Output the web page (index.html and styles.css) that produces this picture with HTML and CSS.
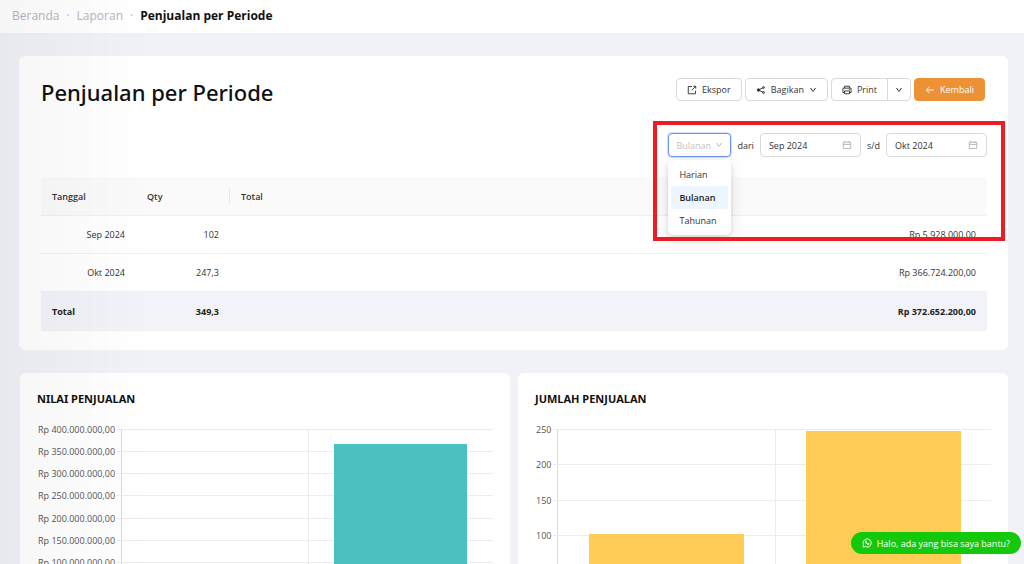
FILE: index.html
```html
<!DOCTYPE html>
<html lang="id">
<head>
    <meta charset="UTF-8">
    <meta name="viewport" content="width=device-width, initial-scale=1.0">
    <title>Penjualan per Periode</title>
    <link rel="stylesheet" href="styles.css">
</head>
<body>

<nav class="breadcrumb">
    <a href="#">Beranda</a>
    <span class="dot">·</span>
    <a href="#">Laporan</a>
    <span class="dot">·</span>
    <strong>Penjualan per Periode</strong>
</nav>

<main>
    <section class="card report">
        <div class="report-head">
            <h1>Penjualan per Periode</h1>
            <div class="actions">
                <button type="button" class="btn">
                    <svg class="icon" viewBox="0 0 16 16"><path d="M8 2.500H2v11.500h11.500V9M10 2h4v4M14 2L7.500 8.500"/></svg>
                    Ekspor
                </button>
                <button type="button" class="btn">
                    <svg class="icon" viewBox="0 0 16 16"><path d="M4 8l8-4M4 8l8 4"/><circle class="fill" cx="4" cy="8" r="2"/><circle cx="12" cy="4" r="1.500"/><circle cx="12" cy="12" r="1.500"/></svg>
                    Bagikan
                    <svg class="caret" viewBox="0 0 16 16"><path d="M3 4l5 7 5-7"/></svg>
                </button>
                <div class="btn-group">
                    <button type="button" class="btn">
                        <svg class="icon" viewBox="0 0 16 16"><path d="M4 5V2h8v3M4 12H1.500V5h13v7H12M4 9.500h8V14H4zM11 7.200h1.500"/></svg>
                        Print
                    </button>
                    <button type="button" class="btn btn-more" aria-label="Opsi print">
                        <svg class="caret" viewBox="0 0 16 16"><path d="M3 4l5 7 5-7"/></svg>
                    </button>
                </div>
                <button type="button" class="btn btn-primary">
                    <svg class="icon" viewBox="0 0 16 16"><path d="M14 8H2M7 3L2 8l5 5"/></svg>
                    Kembali
                </button>
            </div>
        </div>

        <div class="filters">
            <div class="period">
                <select aria-label="Periode">
                    <option>Harian</option>
                    <option selected>Bulanan</option>
                    <option>Tahunan</option>
                </select>
                <svg class="caret" viewBox="0 0 16 16"><path d="M3 4l5 7 5-7"/></svg>
                <ul class="dropdown">
                    <li>Harian</li>
                    <li class="active">Bulanan</li>
                    <li>Tahunan</li>
                </ul>
            </div>
            <label for="dari">dari</label>
            <div class="date">
                <input type="text" id="dari" value="Sep 2024">
                <svg class="icon" viewBox="0 0 16 16"><path d="M2 3.500h12v10H2zM2 7h12M5 1.500v3M11 1.500v3"/></svg>
            </div>
            <label for="sampai">s/d</label>
            <div class="date">
                <input type="text" id="sampai" value="Okt 2024">
                <svg class="icon" viewBox="0 0 16 16"><path d="M2 3.500h12v10H2zM2 7h12M5 1.500v3M11 1.500v3"/></svg>
            </div>
            <div class="highlight"></div>
        </div>

        <table>
            <thead>
                <tr><th class="col-date">Tanggal</th><th class="col-qty">Qty</th><th>Total</th></tr>
            </thead>
            <tbody>
                <tr><td>Sep 2024</td><td>102</td><td>Rp 5.928.000,00</td></tr>
                <tr><td>Okt 2024</td><td>247,3</td><td>Rp 366.724.200,00</td></tr>
            </tbody>
            <tfoot>
                <tr><th scope="row">Total</th><td>349,3</td><td>Rp 372.652.200,00</td></tr>
            </tfoot>
        </table>
    </section>

    <div class="charts">
        <section class="card chart-card">
            <h2>NILAI PENJUALAN</h2>
            <div class="chart">
                <ul class="axis">
                    <li>Rp 400.000.000,00</li>
                    <li>Rp 350.000.000,00</li>
                    <li>Rp 300.000.000,00</li>
                    <li>Rp 250.000.000,00</li>
                    <li>Rp 200.000.000,00</li>
                    <li>Rp 150.000.000,00</li>
                    <li>Rp 100.000.000,00</li>
                    <li>Rp 50.000.000,00</li>
                    <li>Rp 0,00</li>
                </ul>
                <div class="plot">
                    <div class="lines"><i></i><i></i><i></i><i></i><i></i><i></i><i></i><i></i><i></i></div>
                    <div class="slot"><div class="bar teal" style="height: 1.5%"></div></div>
                    <div class="slot"><div class="bar teal" style="height: 91.7%"></div></div>
                </div>
            </div>
        </section>

        <section class="card chart-card">
            <h2>JUMLAH PENJUALAN</h2>
            <div class="chart">
                <ul class="axis">
                    <li>250</li>
                    <li>200</li>
                    <li>150</li>
                    <li>100</li>
                    <li>50</li>
                    <li>0</li>
                </ul>
                <div class="plot">
                    <div class="lines"><i></i><i></i><i></i><i></i><i></i><i></i></div>
                    <div class="slot"><div class="bar yellow" style="height: 40.8%"></div></div>
                    <div class="slot"><div class="bar yellow" style="height: 98.9%"></div></div>
                </div>
            </div>
        </section>
    </div>
</main>

<a href="#" class="chat">
    <svg class="icon" viewBox="0 0 16 16"><path d="M1.500 14.500l1-3.500A6.500 6.500 0 1 1 5 13.600z"/><path d="M5.500 4.800c-1.200 1.800 2.800 6.600 5.200 5.600l.6-1.400-1.800-.9-.8.8c-.8-.3-1.600-1.100-1.900-1.900l.7-.8-.8-1.700z"/></svg>
    Halo, ada yang bisa saya bantu?
</a>

</body>
</html>
```
FILE: styles.css
```css
* {
    box-sizing: border-box;
}
body {
    margin: 0;
    font-family: 'Open Sans', 'Noto Sans', sans-serif;
    font-size: 9px;
    color: #333;
    background-color: #f1f2f7;
}
/* Soft shade along the left edge */
body::after {
    content: "";
    position: fixed;
    top: 0;
    bottom: 0;
    left: 0;
    width: 150px;
    background: linear-gradient(to right, rgba(0, 0, 0, 0.035), rgba(0, 0, 0, 0));
    pointer-events: none;
}
ul {
    list-style: none;
    margin: 0;
    padding: 0;
}
.breadcrumb {
    display: flex;
    align-items: center;
    gap: 7px;
    height: 33px;
    padding: 0 12px 2px;
    background-color: white;
    font-size: 12px;
    color: #111;
}
.breadcrumb a,
.breadcrumb .dot {
    color: #b5b5c3;
    text-decoration: none;
}
main {
    padding: 23px 16px 20px 19px;
}
.card {
    background-color: white;
    border-radius: 6px;
}
.report {
    padding: 22px 21px 19px 22px;
}
.report-head {
    display: flex;
    justify-content: space-between;
    align-items: flex-start;
}
h1 {
    margin: 0;
    font-size: 22px;
    line-height: 28px;
    font-weight: 500;
    font-family: 'Noto Sans', sans-serif;
    color: #111;
}
.actions {
    display: flex;
    gap: 3px;
    padding-right: 2px;
}
.btn {
    display: flex;
    align-items: center;
    gap: 5px;
    height: 23px;
    padding: 0 10px;
    border: 1px solid #d9d9d9;
    border-radius: 4px;
    background-color: white;
    font-family: inherit;
    font-size: 9px;
    color: #333;
}
.btn-group {
    display: flex;
}
.btn-group .btn:first-child {
    border-radius: 4px 0 0 4px;
}
.btn-group .btn-more {
    margin-left: -1px;
    padding: 0 7px;
    border-radius: 0 4px 4px 0;
}
.btn-primary {
    background-color: #ec9235;
    border-color: #ec9235;
    color: white;
}
.icon,
.caret {
    width: 10px;
    height: 10px;
    fill: none;
    stroke: currentColor;
    stroke-width: 1.5;
    flex: none;
}
.icon .fill {
    fill: currentColor;
}
.caret {
    width: 8px;
    height: 8px;
    stroke-width: 2;
}
.filters {
    position: relative;
    display: flex;
    justify-content: flex-end;
    align-items: center;
    gap: 6px;
    margin: 27px 0 20px;
}
.period {
    position: relative;
    width: 63px;
}
.period select {
    display: block;
    appearance: none;
    width: 100%;
    height: 24px;
    padding: 0 7px;
    border: 1px solid #6c94f5;
    border-radius: 4px;
    box-shadow: 0 0 0 1px #d3e0fd;
    background-color: white;
    font-family: inherit;
    font-size: 9px;
    color: #c4c4c4;
    outline: none;
}
.period .caret {
    position: absolute;
    right: 8px;
    top: 8px;
    color: #bbb;
}
.dropdown {
    position: absolute;
    top: 27px;
    left: 0;
    width: 63px;
    padding: 3px;
    border-radius: 5px;
    background-color: white;
    box-shadow: 0 4px 16px rgba(0, 0, 0, 0.1), 0 2px 5px rgba(0, 0, 0, 0.1);
    z-index: 1;
}
.dropdown li {
    padding: 0 8px;
    line-height: 23px;
    border-radius: 3px;
}
.dropdown .active {
    background-color: #edf5ff;
    font-weight: 600;
    color: #222;
}
.date {
    display: flex;
    align-items: center;
    width: 101px;
    height: 24px;
    padding: 0 8px;
    border: 1px solid #d9d9d9;
    border-radius: 4px;
    color: #b5b5b5;
}
.date input {
    flex: 1;
    min-width: 0;
    padding: 0;
    border: 0;
    background: none;
    font-family: inherit;
    font-size: 9px;
    color: #333;
    outline: none;
}
/* Marks the period filter */
.highlight {
    position: absolute;
    top: -12px;
    right: -18px;
    width: 352px;
    height: 120px;
    border: 4px solid #ed1c24;
    z-index: 2;
    pointer-events: none;
}
table {
    width: 100%;
    border-collapse: separate;
    border-spacing: 0;
    table-layout: fixed;
}
th,
td {
    height: 39px;
    padding: 0 11px;
    border-bottom: 1px solid #f0f0f0;
    text-align: right;
}
th {
    text-align: left;
}
thead th {
    background-color: #fafafa;
    background-repeat: no-repeat;
    background-position: right center;
    background-size: 1px 16px;
    font-weight: 600;
    color: #333;
}
thead th:first-child {
    border-top-left-radius: 5px;
}
thead th:last-child {
    border-top-right-radius: 5px;
}
tbody td {
    height: 38px;
}
.col-date {
    width: 95px;
}
.col-qty {
    width: 94px;
    background-image: linear-gradient(#e8e8e8, #e8e8e8);
}
tfoot th,
tfoot td {
    background-color: #f1f3f8;
    font-weight: 700;
    color: #222;
}
.charts {
    display: grid;
    grid-template-columns: 1fr 1fr;
    gap: 8px;
    margin-top: 23px;
    padding-left: 1px;
}
.chart-card {
    padding: 17px 17px 20px;
}
h2 {
    margin: 0;
    font-family: 'Noto Sans', sans-serif;
    font-size: 11px;
    line-height: 18px;
    font-weight: 700;
    color: #111;
}
.chart {
    display: flex;
    gap: 6px;
    height: 178px;
    margin-top: 21px;
    padding-left: 1px;
}
.axis {
    display: flex;
    flex-direction: column;
    justify-content: space-between;
    text-align: right;
    color: #555;
}
.axis li {
    height: 1px;
    line-height: 1px;
}
.plot {
    position: relative;
    flex: 1;
    display: grid;
    grid-template-columns: 1fr 1fr;
    border-left: 1px solid #d8d8d8;
}
.lines {
    position: absolute;
    top: 0;
    bottom: 0;
    left: -5px;
    right: 0;
    display: flex;
    flex-direction: column;
    justify-content: space-between;
}
.lines i {
    height: 1px;
    background-color: #ececec;
}
.slot {
    position: relative;
    display: flex;
    justify-content: center;
    align-items: flex-end;
}
.slot + .slot {
    border-left: 1px solid #ececec;
}
.bar {
    width: 72%;
}
.teal {
    background-color: #4bc0c0;
}
.yellow {
    background-color: #ffcd56;
}
.chat {
    position: fixed;
    right: 3px;
    bottom: 10px;
    display: flex;
    align-items: center;
    gap: 5px;
    height: 22px;
    padding: 0 11px;
    border-radius: 11px;
    background-color: #14c80c;
    color: white;
    font-weight: 500;
    text-decoration: none;
    z-index: 3;
}
```
